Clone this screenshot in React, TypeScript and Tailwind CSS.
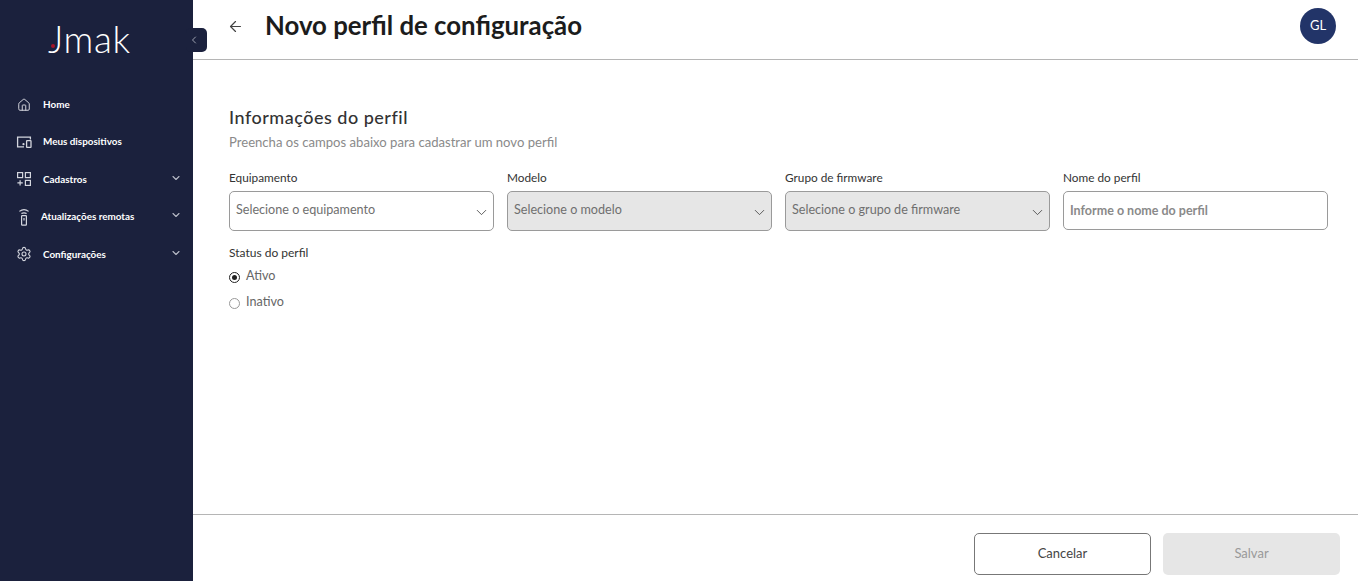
import React from "react";
import { ChevronDown, ChevronLeft, ArrowLeft, House, Settings } from "lucide-react";

const font = "font-['Lato','Noto_Sans',sans-serif]";

function DevicesIcon() {
  return (
    <svg width="16" height="14" viewBox="0 0 16 14" fill="none" stroke="currentColor" strokeWidth="1.3">
      <path d="M8 11.8H1.6V2.2H14.4V4.5" />
      <rect x="10.6" y="5.6" width="4.4" height="6.8" rx="0.5" />
      <circle cx="7.5" cy="9.2" r="1.1" fill="currentColor" stroke="none" />
    </svg>
  );
}
function GridPlusIcon() {
  return (
    <svg width="16" height="16" viewBox="0 0 16 16" fill="none" stroke="currentColor" strokeWidth="1.2">
      <rect x="1.6" y="1.6" width="5" height="5" />
      <rect x="9.4" y="1.6" width="5" height="5" />
      <rect x="9.4" y="9.4" width="5" height="5" />
      <path d="M4.1 9.2v5.4M1.4 11.9h5.4" />
    </svg>
  );
}
function RemoteIcon() {
  return (
    <svg width="16" height="18" viewBox="0 0 16 18" fill="none" stroke="currentColor" strokeWidth="1.2">
      <path d="M3.4 3.4c2.8-2.2 6.4-2.2 9.2 0" />
      <path d="M5.4 5.6c1.6-1 3.6-1 5.2 0" />
      <rect x="5.6" y="7.6" width="4.8" height="9.6" rx="0.6" />
      <path d="M8 10v2.4" />
    </svg>
  );
}

const items = [
  { label: "Home", icon: <House size={14} strokeWidth={1.7} />, arrow: false, gap: "ml-[11px]", h: "h-[37px]" },
  { label: "Meus dispositivos", icon: <DevicesIcon />, arrow: false, gap: "ml-[11px]", h: "h-[37px]" },
  { label: "Cadastros", icon: <GridPlusIcon />, arrow: true, gap: "ml-[11px]", h: "h-[38px]" },
  { label: "Atualizações remotas", icon: <RemoteIcon />, arrow: true, gap: "ml-[9px]", h: "h-[37px]" },
  { label: "Configurações", icon: <Settings size={16} strokeWidth={1.6} />, arrow: true, gap: "ml-[11px]", h: "h-[38px]" },
];

function Sidebar() {
  return (
    <aside className="relative w-[193px] shrink-0 bg-[#1b213d] text-white">
      <div className="absolute left-[186px] top-[28px] flex h-[24px] w-[21px] items-center justify-start rounded-[5px] bg-[#1b213d] pl-[2px] text-[#c9ccd6]">
        <ChevronLeft size={12} strokeWidth={1.5} />
      </div>
      <div className="flex h-[86px] items-start pl-[48px] pt-[17px]">
        <span className="relative font-['Lato',sans-serif] text-[37px] font-light leading-[44px] tracking-[0.6px] text-white">
          Jmak
          <span className="absolute left-[3px] top-[27px] h-[4px] w-[4px] rounded-full bg-[#a3152a]" />
        </span>
      </div>
      <nav className="flex flex-col">
        {items.map((it) => (
          <div key={it.label} className={`flex items-center pl-[16px] pr-[11px] ${it.h}`}>
            <span className="flex w-[16px] justify-center text-[#d4d6de]">{it.icon}</span>
            <span className={`${it.gap} font-['Lato',sans-serif] text-[9.9px] font-bold text-white`}>
              {it.label}
            </span>
            {it.arrow && <ChevronDown size={12} strokeWidth={2.2} className="-mt-[3px] ml-auto text-[#b8bbc7]" />}
          </div>
        ))}
      </nav>
    </aside>
  );
}

function Select({ placeholder, disabled }: { placeholder: string; disabled?: boolean }) {
  return (
    <div className={`flex h-[40px] items-center rounded-[5px] border border-[#9a9a9a] pl-[6px] pr-[3px] ${disabled ? "bg-[#e6e6e6]" : "bg-white"}`}>
      <span className="-mt-[1px] text-[12.6px] text-[#6f6f6f]">{placeholder}</span>
      <ChevronDown size={17} strokeWidth={1.2} className="ml-auto mt-[3px] text-[#444]" />
    </div>
  );
}

function Field({ label, children }: { label: string; children: React.ReactNode }) {
  return (
    <div className="flex flex-col">
      <label className="mb-[5px] h-[16px] text-[11.8px] leading-[16px] text-[#333]">{label}</label>
      {children}
    </div>
  );
}

function Radio({ label, checked }: { label: string; checked?: boolean }) {
  return (
    <div className="flex h-[26px] items-center">
      <span className={`flex h-[11px] w-[11px] items-center justify-center rounded-full border bg-white ${checked ? "border-[#222]" : "border-[#999]"}`}>
        {checked && <span className="h-[5px] w-[5px] rounded-full bg-[#222]" />}
      </span>
      <span className="-mt-[2px] ml-[6px] text-[12.6px] text-[#666]">{label}</span>
    </div>
  );
}

export default function App() {
  return (
    <div className={`flex h-[581px] w-[1358px] overflow-hidden bg-white ${font}`}>
      <Sidebar />
      <main className="flex min-w-0 flex-1 flex-col">
        <header className="flex h-[60px] shrink-0 items-center border-b border-[#b5b5b5] pl-[34px] pr-[22px]">
          <ArrowLeft size={17} strokeWidth={1.7} className="-mt-[6px] text-[#444]" />
          <h1 className="-mt-[8px] ml-[21px] text-[25.8px] font-bold text-[#1c1c1c]">Novo perfil de configuração</h1>
          <div className="-mt-[7px] ml-auto flex h-[36px] w-[36px] items-center justify-center rounded-full bg-[#223468] text-[13px] text-white">
            GL
          </div>
        </header>
        <section className="flex-1 pl-[36px] pr-[30px] pt-[45px]">
          <h2 className="text-[18px] font-medium leading-[24px] tracking-[0.5px] text-[#333]">Informações do perfil</h2>
          <p className="mt-[4px] text-[13.1px] leading-[18px] text-[#8a8a8a]">Preencha os campos abaixo para cadastrar um novo perfil</p>
          <div className="mt-[19px] grid grid-cols-4 gap-[13px]">
            <Field label="Equipamento"><Select placeholder="Selecione o equipamento" /></Field>
            <Field label="Modelo"><Select placeholder="Selecione o modelo" disabled /></Field>
            <Field label="Grupo de firmware"><Select placeholder="Selecione o grupo de firmware" disabled /></Field>
            <Field label="Nome do perfil">
              <div className="flex h-[39px] items-center rounded-[5px] border border-[#9a9a9a] bg-white pl-[6px]">
                <span className="mt-[2px] text-[12.5px] font-bold text-[#8a8a8a]">Informe o nome do perfil</span>
              </div>
            </Field>
          </div>
          <div className="mt-[14px] text-[12px] leading-[16px] text-[#333]">Status do perfil</div>
          <div className="mt-[3px] flex flex-col">
            <Radio label="Ativo" checked />
            <Radio label="Inativo" />
          </div>
        </section>
        <footer className="flex h-[67px] shrink-0 items-start justify-end gap-[12px] border-t border-[#b5b5b5] pr-[18px] pt-[18px]">
          <button className="h-[42px] w-[177px] rounded-[5px] border border-[#777] bg-white text-[13px] text-[#444]">Cancelar</button>
          <button className="h-[42px] w-[177px] rounded-[5px] bg-[#e6e6e6] text-[13px] text-[#999]">Salvar</button>
        </footer>
      </main>
    </div>
  );
}
